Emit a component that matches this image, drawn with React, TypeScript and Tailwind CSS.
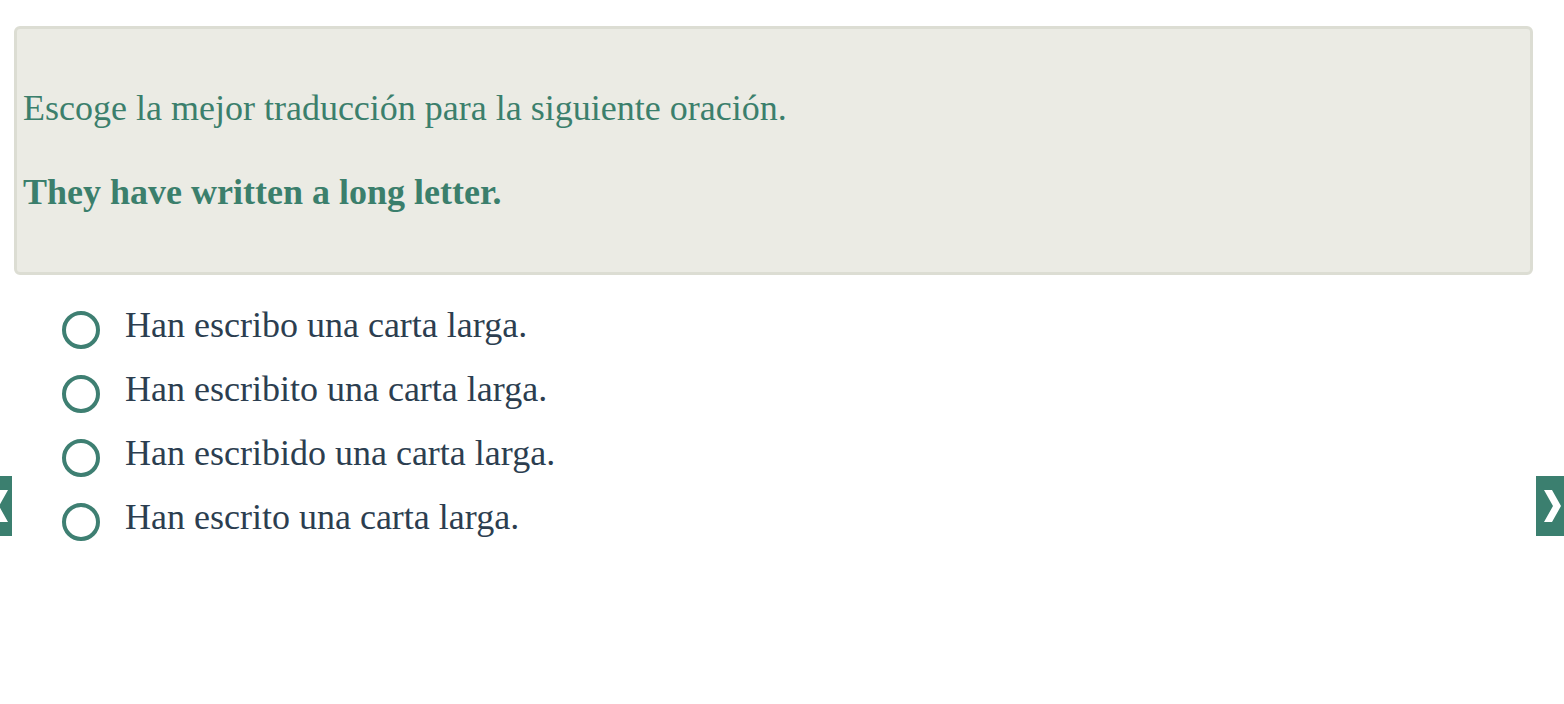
const options = [
  "Han escribo una carta larga.",
  "Han escribito una carta larga.",
  "Han escribido una carta larga.",
  "Han escrito una carta larga.",
];

const Chevron = ({ flip }: { flip?: boolean }) => (
  <svg
    width="17"
    height="32"
    viewBox="0 0 17 32"
    className={flip ? "-scale-x-100" : ""}
  >
    <polygon points="0,0 8,0 17,16 8,32 0,32 9,16" fill="white" />
  </svg>
);

export default function App() {
  return (
    <div className="relative min-h-[704px] bg-white font-['Liberation_Serif',serif]">
      <div className="pt-[26px] pl-[14px] pr-[31px]">
        <div className="rounded-md border-[3px] border-[#dcddd3] bg-[#ebebe4] px-[6px] pt-[59px] pb-[59px] text-[36px] leading-[41px] text-[#3b7f6c]">
          <p>Escoge la mejor traducción para la siguiente oración.</p>
          <p className="mt-[43px] font-bold">They have written a long letter.</p>
        </div>
        <ul className="mt-[30px] flex flex-col pl-[48px] text-[36px] leading-[41px] text-[#2c3e50]">
          {options.map((o) => (
            <li key={o} className="flex h-[64px] items-start gap-[25px]">
              <span className="mt-[6px] h-[38px] w-[38px] shrink-0 rounded-full border-4 border-[#3e7f72]" />
              <span>{o}</span>
            </li>
          ))}
        </ul>
      </div>
      <button className="absolute left-[-16px] top-[476px] flex h-[60px] w-[28px] items-center justify-end overflow-hidden bg-[#3b7f6f] pr-[4px]">
        <Chevron flip />
      </button>
      <button className="absolute left-[1536px] top-[476px] flex h-[60px] w-[28px] items-center justify-start bg-[#3b7f6f] pl-[8px]">
        <Chevron />
      </button>
    </div>
  );
}
